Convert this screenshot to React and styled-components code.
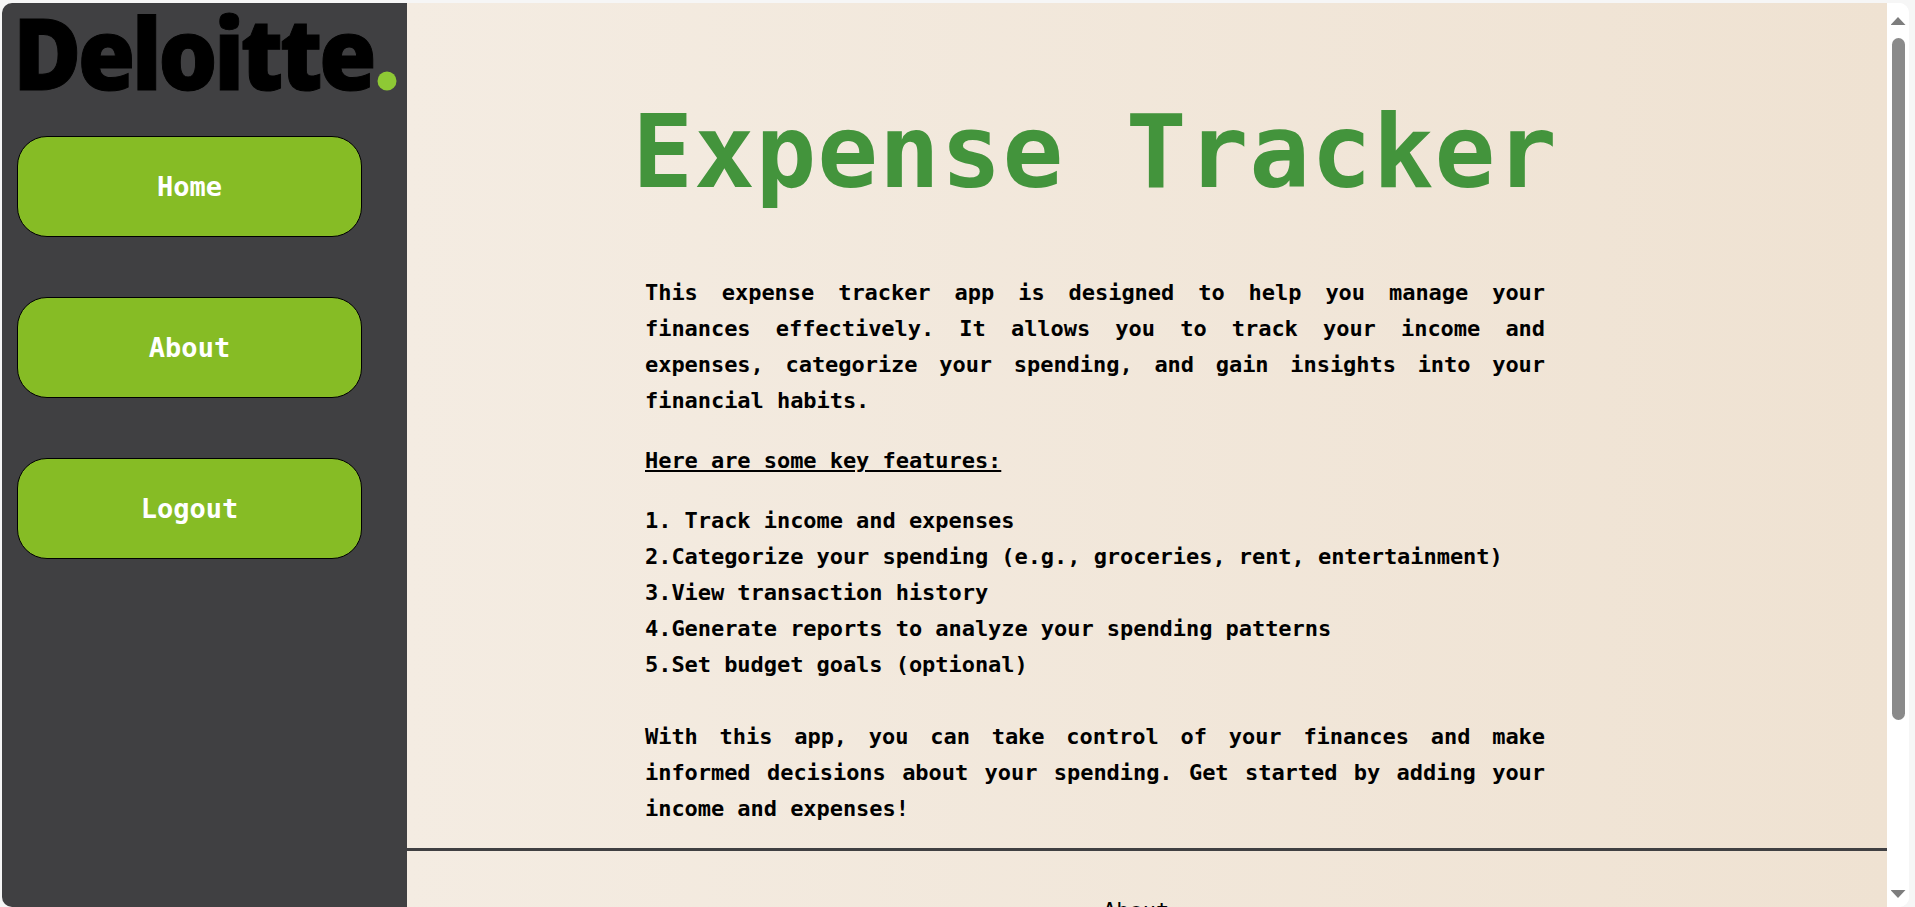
import React from "react";
import styled, { createGlobalStyle } from "styled-components";

const Global = createGlobalStyle`
  html, body { margin: 0; padding: 0; height: 100%; overflow: hidden; background: #f6f6f6; }
  * { box-sizing: border-box; }
`;

const mono = `"DejaVu Sans Mono", "Liberation Mono", monospace`;

const Frame = styled.div`
  width: 1915px;
  height: 907px;
  padding: 3px 6px 0 2px;
  background: #f6f6f6;
`;
const Window = styled.div`
  display: flex;
  height: 100%;
  border-radius: 10px;
  overflow: hidden;
  background: #fff;
  font-family: ${mono};
`;
const Sidebar = styled.aside`
  flex: 0 0 405px;
  background: #404042;
  padding: 9px 0 0 15px;
`;
const LogoBox = styled.svg`
  display: block;
  width: 380px;
  height: 84px;
  margin: 0 0 40px 2px;
  overflow: visible;
`;
const NavList = styled.nav`
  display: flex;
  flex-direction: column;
  gap: 60px;
`;
const NavButton = styled.button`
  width: 345px;
  height: 101px;
  border: 1px solid #000;
  border-radius: 30px;
  background: #86bc25;
  color: #fff;
  font: bold 27px ${mono};
  padding: 0;
`;
const Main = styled.main`
  flex: 1;
  min-width: 0;
  background: linear-gradient(to right, #f4ece2, #efe2d2);
  overflow: hidden;
`;
const Intro = styled.section`
  display: flex;
  flex-direction: column;
  align-items: center;
  padding: 0 104px 0 0;
`;
const Title = styled.h1`
  margin: 89px 0 0;
  height: 120px;
  font: bold 101px/120px ${mono};
  letter-spacing: 0.9px;
  color: #43943c;
  white-space: nowrap;
`;
const Body = styled.div`
  width: 900px;
  margin-top: 63px;
  color: #000;
  font: bold 22px/36px ${mono};
  letter-spacing: -0.05px;
`;
const Para = styled.p`
  margin: 0 0 ${(p) => (p.$last ? "21px" : "24px")};
  margin-top: ${(p) => (p.$spaced ? "36px" : "0")};
  text-align: ${(p) => (p.$justify ? "justify" : "left")};
  text-decoration: ${(p) => (p.$underline ? "underline" : "none")};
`;
const Footer = styled.footer`
  border-top: 3px solid #404042;
  padding: 42px 0 0 696px;
  color: #000;
  font: 22px/36px ${mono};
`;
const Scrollbar = styled.div`
  flex: 0 0 22px;
  display: flex;
  flex-direction: column;
  align-items: center;
  background: #fff;
  padding-top: 14px;
`;
const Arrow = styled.div`
  width: 15px;
  height: 8px;
  background: #7d7d7d;
  clip-path: ${(p) =>
    p.$down ? "polygon(0 0, 100% 0, 50% 100%)" : "polygon(50% 0, 100% 100%, 0 100%)"};
`;
const Thumb = styled.div`
  width: 13px;
  height: 682px;
  margin: 13px 0 170px;
  border-radius: 7px;
  background: #8a8a8a;
`;

export default function App() {
  return (
    <Frame>
      <Global />
      <Window>
        <Sidebar>
          <LogoBox viewBox="0 0 380 84" aria-label="Deloitte">
            <text
              x="-6"
              y="78"
              fontFamily="'Open Sans', 'Noto Sans', sans-serif"
              fontWeight="800"
              fontSize="100"
              letterSpacing="-4"
              textLength="360"
              lengthAdjust="spacingAndGlyphs"
              stroke="#000"
              strokeWidth="1"
              fill="#000"
            >
              Deloitte
            </text>
            <circle cx="368" cy="69" r="9.5" fill="#8ec935" />
          </LogoBox>
          <NavList>
            <NavButton>Home</NavButton>
            <NavButton>About</NavButton>
            <NavButton>Logout</NavButton>
          </NavList>
        </Sidebar>
        <Main>
          <Intro>
            <Title>Expense Tracker</Title>
            <Body>
              <Para $justify>
                This expense tracker app is designed to help you manage your finances effectively. It allows you to track your income and expenses, categorize your spending, and gain insights into your financial habits.
              </Para>
              <Para $underline>Here are some key features:</Para>
              <Para>
                1. Track income and expenses<br />
                2.Categorize your spending (e.g., groceries, rent, entertainment)<br />
                3.View transaction history<br />
                4.Generate reports to analyze your spending patterns<br />
                5.Set budget goals (optional)
              </Para>
              <Para $justify $spaced $last>
                With this app, you can take control of your finances and make informed decisions about your spending. Get started by adding your income and expenses!
              </Para>
            </Body>
          </Intro>
          <Footer>About</Footer>
        </Main>
        <Scrollbar>
          <Arrow />
          <Thumb />
          <Arrow $down />
        </Scrollbar>
      </Window>
    </Frame>
  );
}
